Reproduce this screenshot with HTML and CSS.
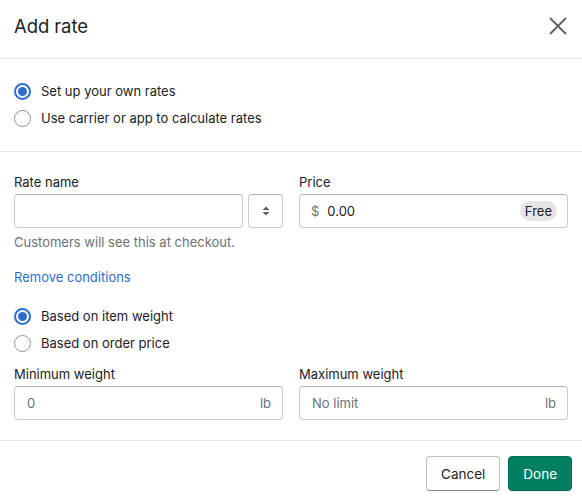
FILE: index.html
```html
<!DOCTYPE html>
<html>
<head>
<meta charset="utf-8">
<link rel="stylesheet" href="styles.css">
</head>
<body>
<div class="modal">
  <header class="head">
    <h1 class="title">Add rate</h1>
    <button class="close" aria-label="Close">
      <svg width="20" height="20" viewBox="0 0 20 20"><path d="M2.5 2.5L17.5 17.5M17.5 2.5L2.5 17.5" stroke="#5c5f62" stroke-width="1.8" stroke-linecap="round"/></svg>
    </button>
  </header>
  <section class="sec sec-type">
    <label class="radio"><span class="dot on"></span>Set up your own rates</label>
    <label class="radio"><span class="dot"></span>Use carrier or app to calculate rates</label>
  </section>
  <section class="sec sec-main">
    <div class="grid">
      <div class="field">
        <div class="label">Rate name</div>
        <div class="row">
          <div class="input grow"></div>
          <div class="input sel">
            <svg width="10" height="12" viewBox="0 0 10 12"><path d="M5 1.5L8.5 5H1.5Z M5 10.5L8.5 7H1.5Z" fill="#5c5f62"/></svg>
          </div>
        </div>
        <div class="help">Customers will see this at checkout.</div>
      </div>
      <div class="field">
        <div class="label">Price</div>
        <div class="input price">
          <span class="pre">$</span><span class="val">0.00</span><span class="badge">Free</span>
        </div>
      </div>
    </div>
    <a class="link">Remove conditions</a>
    <div class="conds">
      <label class="radio"><span class="dot on"></span>Based on item weight</label>
      <label class="radio"><span class="dot"></span>Based on order price</label>
    </div>
    <div class="grid g2">
      <div class="field">
        <div class="label">Minimum weight</div>
        <div class="input unit"><span class="ph">0</span><span class="suf">lb</span></div>
      </div>
      <div class="field">
        <div class="label">Maximum weight</div>
        <div class="input unit"><span class="ph">No limit</span><span class="suf">lb</span></div>
      </div>
    </div>
  </section>
  <footer class="foot">
    <button class="btn">Cancel</button>
    <button class="btn primary">Done</button>
  </footer>
</div>
</body>
</html>
```
FILE: styles.css
```css
* { box-sizing: border-box; }
html, body { margin: 0; background: #fff; }
body { font-family: Inter, "Noto Sans", sans-serif; font-size: 13px; color: #202223; }
.modal { width: 582px; height: 500px; display: flex; flex-direction: column; }
.head { height: 59px; border-bottom: 1px solid #e1e3e5; display: flex; align-items: center; justify-content: space-between; padding: 0 14px 7px 14px; }
.title { margin: 0; font-size: 18.5px; font-weight: 400; letter-spacing: -0.1px; line-height: 24px; }
.close { border: 0; background: none; padding: 0; width: 20px; height: 20px; display: flex; }
.sec { border-bottom: 1px solid #e1e3e5; padding: 0 14px; }
.sec-type { height: 93px; padding-top: 24px; display: flex; flex-direction: column; gap: 10px; }
.radio { display: flex; align-items: center; gap: 10px; height: 17px; line-height: 17px; }
.dot { width: 17px; height: 17px; border-radius: 50%; border: 1.5px solid #8c9196; flex: none; position: relative; }
.dot.on { border: 2px solid #2c6ecb; }
.dot.on::after { content: ""; position: absolute; left: 2px; top: 2px; width: 9px; height: 9px; border-radius: 50%; background: #2c6ecb; }
.sec-main { height: 289px; padding-top: 21px; }
.grid { display: grid; grid-template-columns: 269px 269px; column-gap: 16px; }
.label { height: 18px; line-height: 18px; margin-bottom: 3px; }
.row { display: flex; gap: 5px; }
.input { height: 34px; border: 1px solid #c9cccf; border-top-color: #aeb4b9; border-radius: 4px; background: #fff; }
.grow { flex: 1; }
.sel { width: 35px; flex: none; display: flex; align-items: center; justify-content: center; }
.help { color: #6d7175; margin-top: 5px; line-height: 18px; }
.price { display: flex; align-items: center; padding: 0 10px 0 11px; }
.pre { color: #6d7175; margin-right: 8px; }
.val { flex: 1; }
.badge { background: #e4e5e7; border-radius: 10px; padding: 0 5px; height: 20px; line-height: 20px; font-size: 13px; }
.link { display: block; color: #2c6ecb; margin-top: 17px; line-height: 18px; }
.conds { margin-top: 22px; display: flex; flex-direction: column; gap: 10px; }
.g2 { margin-top: 13px; }
.unit { display: flex; align-items: center; justify-content: space-between; padding: 0 11px 0 12px; color: #6d7175; }
.foot { flex: 1; display: flex; justify-content: flex-end; align-items: flex-start; gap: 8px; padding: 15px 10px 0 0; }
.btn { font-family: inherit; font-size: 13.5px; height: 35px; padding: 0 14px; border: 1px solid #babfc3; border-bottom-color: #8c9196; border-radius: 4px; background: #fff; color: #202223; box-shadow: 0 1px 0 rgba(0,0,0,0.05); }
.btn.primary { background: #008060; border-color: #006e52; color: #fff; padding: 0 14px; }
```
